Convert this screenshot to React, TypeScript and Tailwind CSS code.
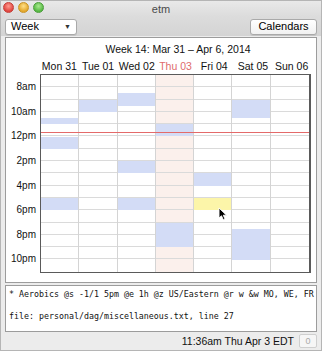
import React from 'react'

const ROW = 12.3
const DAYS = ['Mon 31', 'Tue 01', 'Wed 02', 'Thu 03', 'Fri 04', 'Sat 05', 'Sun 06']
const HOURS = ['8am', '10am', '12pm', '2pm', '4pm', '6pm', '8pm', '10pm']

// [day, start, end, yellow?]
const EVENTS: [number, number, number, boolean?][] = [
  [0, 10.5, 11],
  [0, 12, 13],
  [0, 17, 18],
  [1, 9, 10],
  [2, 8.5, 9.5],
  [2, 14, 15],
  [2, 17, 18],
  [3, 11, 12],
  [3, 19, 21],
  [4, 15, 16],
  [4, 17, 18, true],
  [5, 9, 10.5],
  [5, 19.5, 22],
]

function Cursor() {
  return (
    <svg width="10" height="14" viewBox="0 0 10 14" className="absolute left-[217px] top-[206px]">
      <path d="M1 1 L1 11 L3.5 8.8 L5.3 12.8 L7 12 L5.3 8.2 L8.5 8.2 Z" fill="#000" stroke="#fff" strokeWidth="0.9" />
    </svg>
  )
}

export default function App() {
  const now = 11 + 36 / 60

  return (
    <div
      className="relative w-[322px] h-[351px] flex flex-col bg-[#ececec] border border-[#b5b5b5] overflow-hidden"
      style={{ fontFamily: '"Lucida Grande", "Liberation Sans", Arial, sans-serif' }}
    >
      {/* title bar */}
      <div className="relative h-[15px] flex items-center justify-center bg-gradient-to-b from-[#e9e9e9] to-[#dcdcdc]">
        <div className="absolute left-[2px] top-[1px] flex gap-[4px]">
          <span className="w-[11px] h-[11px] rounded-full bg-[radial-gradient(circle_at_50%_35%,#ff9a8f,#e0443e_70%)] border border-[#c4403a]" />
          <span className="w-[11px] h-[11px] rounded-full bg-[radial-gradient(circle_at_50%_35%,#ffe08a,#e3a72a_70%)] border border-[#c99427]" />
          <span className="w-[11px] h-[11px] rounded-full bg-[radial-gradient(circle_at_50%_35%,#a9ea8f,#56b843_70%)] border border-[#4b9d3a]" />
        </div>
        <span className="text-[11px] text-[#4a4a4a] leading-none mt-[1px]">etm</span>
      </div>

      {/* toolbar */}
      <div className="flex items-center justify-between px-[4px] pt-[1px] h-[20px] bg-gradient-to-b from-[#dcdcdc] to-[#d4d4d4]">
        <div className="w-[72px] h-[16px] flex items-center justify-between pl-[5px] pr-[5px] bg-white border border-[#a9a9a9] rounded-[3px] shadow-[0_1px_0_rgba(0,0,0,0.08)]">
          <span className="text-[11px] text-black leading-none">Week</span>
          <span className="text-[7px] text-[#333] leading-none">▼</span>
        </div>
        <div className="w-[67px] h-[16px] flex items-center justify-center bg-gradient-to-b from-white to-[#f1f1f1] border border-[#a9a9a9] rounded-[3px] shadow-[0_1px_0_rgba(0,0,0,0.08)]">
          <span className="text-[11px] text-black leading-none">Calendars</span>
        </div>
      </div>

      {/* calendar panel */}
      <div className="mx-[4px] mt-[1px] h-[246px] bg-white border border-[#9c9c9c] flex flex-col">
        <div className="h-[20px] pt-[2px] pl-[34px] flex items-center justify-center text-[10.5px] text-[#111] leading-none">
          Week 14: Mar 31 – Apr 6, 2014
        </div>
        <div className="ml-[34px] w-[271px] grid grid-cols-7 h-[16px] items-center">
          {DAYS.map((d, i) => (
            <div
              key={d}
              className={`text-center text-[10.5px] leading-none ${i === 3 ? 'text-[#e06c6c]' : 'text-[#111]'}`}
            >
              {d}
            </div>
          ))}
        </div>
        <div className="flex">
          <div className="w-[34px] flex flex-col pt-[1px]">
            {HOURS.map(h => (
              <div key={h} className="h-[24.6px] flex items-center justify-end pr-[4px] text-[10px] text-[#111] leading-none">
                {h}
              </div>
            ))}
          </div>
          <div className="relative w-[271px] border border-[#5a5a5a] border-r-2 grid grid-cols-7">
            {DAYS.map((d, i) => (
              <div
                key={d}
                className={`relative ${i < 6 ? 'border-r border-[#d4d4d4]' : ''} ${i === 3 ? 'bg-[#fbf0ec]' : ''}`}
              >
                {Array.from({ length: 16 }).map((_, r) => (
                  <div key={r} className={`h-[12.3px] ${r < 15 ? 'border-b border-[#dadada]' : ''}`} />
                ))}
                {EVENTS.filter(e => e[0] === i).map((e, k) => (
                  <div
                    key={k}
                    className={`absolute left-0 right-0 ${e[3] ? 'bg-[#fcf5a9]' : 'bg-[#d3dcf6]'}`}
                    style={{ top: (e[1] - 7) * ROW, height: (e[2] - e[1]) * ROW }}
                  />
                ))}
              </div>
            ))}
            <div
              className="absolute left-0 right-0 h-[1px] bg-[#e46a6a]"
              style={{ top: Math.round((now - 7) * ROW) }}
            />
          </div>
        </div>
      </div>

      {/* details panel */}
      <div
        className="mx-[4px] mt-[2px] h-[47px] bg-white border border-[#9c9c9c] px-[3px] pt-[3px] text-[8.3px] text-[#111] whitespace-pre"
        style={{ fontFamily: '"DejaVu Sans Mono", "Liberation Mono", monospace' }}
      >
        <div className="leading-[10px]">* Aerobics @s -1/1 5pm @e 1h @z US/Eastern @r w &w MO, WE, FR</div>
        <div className="leading-[10px] mt-[12px]">file: personal/dag/miscellaneous.txt, line 27</div>
      </div>

      {/* status bar */}
      <div className="flex-1 flex items-center justify-end gap-[5px] pr-[4px]">
        <span className="text-[10.5px] text-[#111] leading-none">11:36am Thu Apr 3 EDT</span>
        <span className="w-[18px] h-[14px] flex items-center justify-center bg-[#f6f6f6] border border-[#cfcfcf] rounded-[2px] text-[9px] text-[#aaa] leading-none">
          0
        </span>
      </div>

      <Cursor />
    </div>
  )
}
